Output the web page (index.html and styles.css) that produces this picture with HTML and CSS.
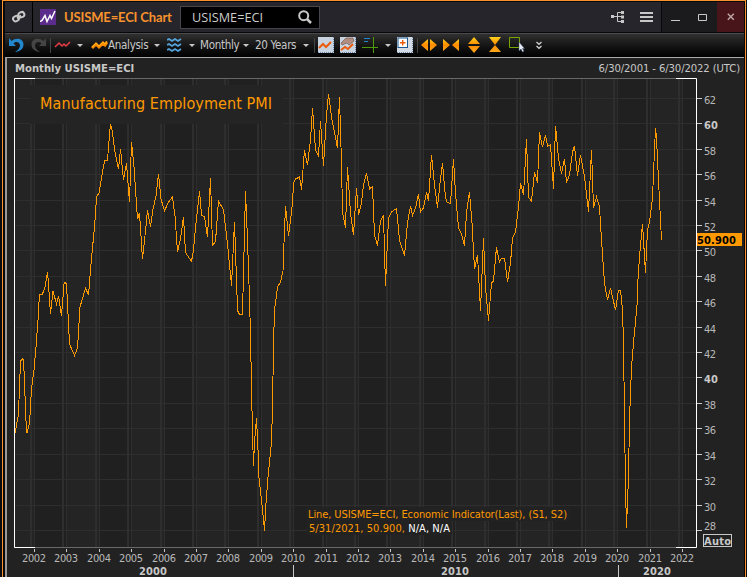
FILE: index.html
```html
<!DOCTYPE html>
<html lang="en">
<head>
    <meta charset="UTF-8" />
    <meta name="viewport" content="width=device-width, initial-scale=1.0"/>
    <title>USISME=ECI Chart</title>
    <link rel="stylesheet" href="styles.css">
</head>
<body>
<div class="window">
    <header class="titlebar">
        <div class="link-cell">
            <svg width="14" height="14" viewBox="0 0 14 14" fill="none" stroke="#c8c8c8" stroke-width="2">
                <rect x="1.2" y="6.2" width="6" height="5" rx="2.5" transform="rotate(-25 4 9)"/>
                <rect x="6.5" y="2.2" width="6" height="5" rx="2.5" transform="rotate(-25 9.5 5)"/>
                <path d="M5 8.5l4-3"/>
            </svg>
        </div>
        <svg class="logo" width="16" height="16" viewBox="0 0 16 16">
            <rect width="16" height="16" fill="#5c2c8c"/>
            <path d="M0 12.5l2-1 3-5 2 6 3-6 1.500 3L15 2" fill="none" stroke="#fff" stroke-width="1.5"/>
        </svg>
        <h1>USISME=ECI Chart</h1>
        <div class="search">
            <span>USISME=ECI</span>
            <svg width="14" height="14" viewBox="0 0 14 14" fill="none" stroke="#c8c8c8">
                <circle cx="5.700" cy="5.700" r="4.500" stroke-width="2"/>
                <path d="M9 9l4 4" stroke-width="2.500"/>
            </svg>
        </div>
        <div class="menu-icons">
            <svg width="14" height="14" viewBox="0 0 14 14" fill="#c8c8c8">
                <path d="M0 5h3v3H0zM10 1h3v3h-3zM10 5.500h3v3h-3zM10 10h3v3h-3z"/>
                <path d="M3 6.500h7M10 2.500H6.500v9H10" fill="none" stroke="#c8c8c8"/>
            </svg>
            <svg width="13" height="12" viewBox="0 0 13 12" fill="#c8c8c8">
                <path d="M0 1h13v2H0zM0 5h13v2H0zM0 9h13v2H0z"/>
            </svg>
        </div>
        <div class="win-btns">
            <svg width="55" height="29" viewBox="0 0 55 29" fill="none" stroke="#c8c8c8">
                <path d="M9 18.500h9M36.500 12.500h8v6h-8z"/>
            </svg>
        </div>
        <div class="close">
            <svg width="8" height="8" viewBox="0 0 8 8"><path d="M.8.8l6 6M6.800.8l-6 6" stroke="#c0a8a8" stroke-width="1.400"/></svg>
        </div>
    </header>

    <nav class="toolbar">
        <svg width="17" height="16" viewBox="0 0 17 16"><path d="M1 1v8h7L5.500 6.500C8 4 12 5 12 8.500 12 11 10 13 7 15c5-.5 8.500-3 8.500-7.500C15.500 1.500 8 0 3.500 4z" fill="#2287cc"/></svg>
        <svg width="17" height="16" viewBox="0 0 17 16"><path d="M15 1v8H8l2.500-2.500C8 4 4 5 4 8.500 4 11 6 13 9 15 4 14.500.5 12 .5 7.500.5 1.500 8 0 12.500 4z" fill="#454545"/></svg>
        <i class="sep"></i>
        <svg width="17" height="8" viewBox="0 0 17 8"><path d="M1 6l4-4 3 3 2-2 2 2 4-4" fill="none" stroke="#e63c46" stroke-width="1.500"/></svg>
        <i class="arrow"></i>
        <svg width="17" height="11" viewBox="0 0 17 11"><path d="M1 8l4-4 3 3 4-4 2 2 2-3" fill="none" stroke="#ff8c00" stroke-width="3"/><path d="M1 7l4-4 3 3 4-4 2 2 2-3" fill="none" stroke="#ffb81c"/></svg>
        <span>Analysis</span>
        <i class="arrow"></i>
        <svg width="15" height="15" viewBox="0 0 15 15"><path d="M0 2l2-1 3 2 3-2 3 2 3-2M0 7l2-1 3 2 3-2 3 2 3-2M0 12l2-1 3 2 3-2 3 2 3-2" fill="none" stroke="#55a5dc" stroke-width="1.800"/></svg>
        <i class="arrow"></i>
        <span>Monthly</span>
        <i class="arrow"></i>
        <span>20 Years</span>
        <i class="arrow"></i>
        <i class="sep"></i>
        <svg width="16" height="16" viewBox="0 0 16 16"><rect width="16" height="16" fill="#c9d3df"/><path d="M15.500 0v16M0 15.500h16" stroke="#6688ad" stroke-dasharray="1 1"/><path d="M1 11l4-4 3 3 5-5" fill="none" stroke="#ea5b0c" stroke-width="2"/></svg>
        <svg width="16" height="16" viewBox="0 0 16 16"><rect width="16" height="16" fill="#c9d3df"/><path d="M15.500 0v16M0 15.500h16" stroke="#6688ad" stroke-dasharray="1 1"/><path d="M1 6l5-5h7l1 3-5 4-2-2-5 2z" fill="#b08d80" stroke="#6c5047" stroke-width=".6"/><path d="M1 13l4-3 3 2 5-5" fill="none" stroke="#ea5b0c" stroke-width="2"/></svg>
        <svg width="17" height="16" viewBox="0 0 17 16"><path d="M11.500 0v16M0 10.500h16" stroke="#4e9c0a"/><path d="M2 1.500h6M2 4.500h4" stroke="#2287cc"/></svg>
        <i class="arrow"></i>
        <svg width="16" height="16" viewBox="0 0 16 16"><rect width="16" height="16" fill="#d5dbe3"/><path d="M15.500 0v16M0 15.500h16" stroke="#6688ad" stroke-dasharray="1 1"/><rect x="1" y="1" width="9.500" height="9.500" fill="#fff" stroke="#1b5791"/><path d="M5.700 3v5.500M3 5.700h5.500" stroke="#ea5b0c" stroke-width="1.400"/></svg>
        <i class="sep"></i>
        <svg width="16" height="14" viewBox="0 0 16 14"><path d="M0 7l7-6v12zM16 7L9 1v12z" fill="url(#gold)"/></svg>
        <svg width="16" height="14" viewBox="0 0 16 14"><path d="M0 1l7 6-7 6zM16 1L9 7l7 6z" fill="url(#gold)"/></svg>
        <svg width="14" height="16" viewBox="0 0 14 16"><path d="M1 7l6-7 6 7zM1 9l6 7 6-7z" fill="url(#gold)"/></svg>
        <svg width="14" height="16" viewBox="0 0 14 16"><path d="M1 0h12L7 8zM1 15h12L7 8z" fill="url(#gold)"/></svg>
        <svg width="16" height="16" viewBox="0 0 16 16"><path d="M.5.5h10v10H.5z" fill="none" stroke="#78a800"/><path d="M10 5v9l2-2 1.500 3 1.500-1-1.500-2.500h2z" fill="#e4ebf5" stroke="#46546b" stroke-width=".5"/></svg>
        <svg width="6" height="9" viewBox="0 0 6 9"><path d="M.5 1L3 3.300 5.500 1M.5 5L3 7.300 5.500 5" fill="none" stroke="#d0d0d0" stroke-width="1.300"/></svg>
    </nav>

    <main class="panel">
        <div class="panel-head">
            <b>Monthly USISME=ECI</b>
            <span>6/30/2001 - 6/30/2022 (UTC)</span>
        </div>
        <svg class="chart" width="737" height="500" viewBox="7 77 737 500">
            <defs>
                <linearGradient id="gold" x1="0" y1="0" x2="0" y2="1">
                    <stop offset="0" stop-color="#ffd21c"/>
                    <stop offset=".5" stop-color="#ff8a00"/>
                    <stop offset="1" stop-color="#ffa91a"/>
                </linearGradient>
            </defs>
            <g id="grid" shape-rendering="crispEdges"></g>
            <rect x="30" y="85" width="253" height="39" fill="#242424"/>
            <rect x="307" y="507" width="263" height="14" fill="#222"/>
            <rect x="307" y="521" width="145" height="14" fill="#222"/>
            <polyline class="series" shape-rendering="crispEdges" points="15,433 18,417 19,400 20,374 20.7,361 23,358.5 24,371 25,396 26,421 27,433 29,425 30,415 31,397 32,385 34,370 36,347 38,320 39.5,294 42.5,294 45,287 47.5,272 48.5,284 50.5,314 53,291 56.5,304 58.5,296 61.5,316 64,284 64.7,282.5 66.5,283.5 69.5,344 74.5,355.5 77.5,348 80,307 85.5,288 88.5,295 91,264 94,232 94.5,228 96.5,197 99,193 101.5,178 104.5,161 107.5,160 109,141 110.5,124 112,130 115,152 118.5,169 120.5,149 123.5,180 126.5,163 129.5,202 131.5,142 134,167 137.5,219 139.5,213 142.5,259 145.5,231 147.5,210 150.5,227 153,209 156,196 158.5,174 161,199 164.5,211 168,203 172.5,197 175,216 177.5,252 180.5,239 183.5,217 185.5,252.5 191.5,261.5 193.5,250 195.5,228 199.5,191 201.5,215 204.5,217 207.5,237 210.5,178 212.5,245.5 215.5,241.5 218.5,201 223.5,210 227.5,244 231.5,285.5 234.5,222 237,295 237.7,311 239.5,314.5 242.5,314.5 243,293 245.5,191 247.5,240 249.5,299 250.5,335 251.5,387 252.5,433 253.5,466 254.5,442 256.5,418 258.5,460 259,478 261.5,500 264.5,530.5 266,503 268,477 270,457 271.5,442 272.5,407 273.5,345 274.5,310 276.5,295 277.5,287 280.5,282 283,271 284,243 285.5,206 288.5,236 290.5,220 292.5,203 293.5,183 295.5,179 299.5,177 301.5,189.5 304.5,150 307.5,165 310.5,140 312.5,108 315.5,150 318.5,156 320.5,121 323.5,166 326.5,115 328.5,94 332,120 337.5,148 339.5,97 341.5,163 342.5,212 345.5,228 347.5,167 350.5,213 353.5,235 356.5,188 358.5,215 361.5,203 363.5,185 366.5,173 369.5,189 372.5,186.5 374.5,235 377.5,245.5 380.5,221 383.5,215 385.5,285.5 388.5,218 391.5,212 396.5,208.5 399.5,240 404.5,255.5 407.5,223 410.5,206 412.5,215.5 415.5,208 418.5,194 420.5,212 423.5,208 426.5,192 428.5,200.5 431.5,155 434.5,185 437.5,207.5 440,183 442.5,163 445.5,198 447,202 450.5,203.5 453.5,159 455.5,193 458.5,228 461.5,234 464.5,245.5 466.5,213 469.5,192 472,223 474.5,269 477.5,255 480.5,310.5 483.5,238 485.5,287 488.5,320.5 491.5,283 493.5,281 496.5,247 499.5,262 501.5,258 504.5,258 507.5,282 510.5,263 512.5,238 515.5,232 518.5,207 520.5,183 523.5,195 526.5,139 528.5,197 531.5,201.5 534.5,172 537.5,182.5 539.5,132 542.5,147 545.5,135 547.5,146 550.5,145 553.5,188.5 555.5,126 558.5,158 561.5,173.5 564.5,159 566.5,182.5 569.5,175 572.5,152 574.5,146 577.5,176 580.5,155 584.5,177 588.5,211.5 591.5,150 593.5,207.5 596.5,197 599.5,207 601.5,240 604.5,283 607.5,300 610.5,288 615.5,310 618.5,290 620.5,290 622.5,310 623.5,343 624.5,417 625.5,487 626.5,527.5 628.5,477 629.5,420 631.5,367 633.5,343 637.5,300 637.5,287 639.5,257 642.5,224 645.5,272.5 647.5,230 649.5,222 652.5,198 654.5,150 655.5,128 656.5,138 658.5,180 661.5,240"/>
            <g id="axes"></g>
            <text class="chart-title" x="40" y="109" textLength="232">Manufacturing Employment PMI</text>
            <text class="legend" x="308" y="518" textLength="259">Line, USISME=ECI, Economic Indicator(Last), (S1, S2)</text>
            <text class="legend" x="309" y="532" textLength="141">5/31/2021, 50.900, <tspan fill="#fff">N/A, N/A</tspan></text>
            <rect x="697" y="233" width="45" height="13" fill="#f90"/>
            <text class="last" x="697" y="244" textLength="39">50.900</text>
            <rect x="703.5" y="534.5" width="28" height="12" fill="none" stroke="#c8c8c8"/>
            <text class="bold" x="704" y="545" textLength="27">Auto</text>
        </svg>
    </main>
</div>

<script>
    const grid = document.getElementById("grid");
    const axes = document.getElementById("axes");
    const left = 15, right = 696, top1 = 79, bottom = 547;

    const xOf = year => Math.round(34 + (year - 2002) * 32.4);
    const yOf = value => Math.floor(123.8 + (60 - value) * 12.708);

    let g = `<rect x="${left}" y="${top1}" width="${right - left}" height="${bottom - top1}" fill="#242424"/>`;
    let a = "";

    for (let year = 2002; year <= 2022; year++) {
      const x = xOf(year);
      if (year % 2 === 0) {
        const end = Math.min(xOf(year + 1), right);
        g += `<rect x="${x}" y="${top1}" width="${end - x}" height="${bottom - top1}" fill="#202020"/>`;
      }
      g += `<rect class="line" x="${x - 4}" y="${top1}" width="2" height="${bottom - top1}"/>`;
      g += `<rect class="line" x="${x}" y="${top1}" width="1" height="${bottom - top1}"/>`;
      a += `<rect class="tick" x="${x}" y="549" width="1" height="3"/>`;
      a += `<text class="tick-text" x="${x - 12}" y="562" textLength="24">${year}</text>`;
    }

    for (let value = 28; value <= 62; value += 2) {
      const y = yOf(value);
      const bold = value % 20 === 0 ? " bold" : "";
      g += `<rect class="line" x="${left}" y="${y}" width="${right - left}" height="1"/>`;
      a += `<rect class="tick" x="697" y="${y}" width="5" height="1"/>`;
      a += `<text class="tick-text${bold}" x="704" y="${value === 28 ? y : y + 6}" textLength="${bold ? 14 : 12}">${value}</text>`;
    }

    // frame: grey edges, bright at the corners
    a += `<path d="M14 78.500H696M14 547.500H696" stroke="#686868"/>`;
    a += `<path d="M35 78.500H14.500V547.500H35M676 78.500H696.500V547.500H676" fill="none" stroke="#fff"/>`;

    // decades
    a += `<path d="M293.500 565v12M618.500 565v12" stroke="#c8c8c8"/>`;
    [[2000, 139], [2010, 441], [2020, 643]].forEach(d => {
      a += `<text class="tick-text bold" x="${d[1]}" y="575" textLength="28">${d[0]}</text>`;
    });

    grid.innerHTML = g;
    axes.innerHTML = a;
</script>
</body>
</html>
```
FILE: styles.css
```css
body {
  margin: 0;
  background: #0b0b12;
  color: #c8c8c8;
  font-family: "DejaVu Sans Condensed", "DejaVu Sans", sans-serif;
  font-stretch: condensed;
  font-size: 12px;
  overflow: hidden;
}

svg {
  display: block;
}

.window {
  box-sizing: border-box;
  width: 744px;
  height: 577px;
  margin-left: 2px;
  padding: 1px 1px 0 2px;
  border: 1px solid #f7922d;
  border-bottom: none;
  background: #08080c;
  overflow: hidden;
}

.titlebar {
  display: flex;
  align-items: center;
  height: 30px;
  background: #25252b;
}

.link-cell {
  display: flex;
  align-items: center;
  justify-content: center;
  width: 27px;
  height: 30px;
  border-right: 1px solid #000;
}

.logo {
  margin-left: 7px;
}

h1 {
  margin: 0 0 0 8px;
  width: 116px;
  color: #f7922d;
  font-family: Lato, sans-serif;
  font-stretch: normal;
  font-size: 13px;
  font-weight: bold;
  letter-spacing: -0.15px;
  white-space: nowrap;
}

.search {
  box-sizing: border-box;
  display: flex;
  align-items: center;
  justify-content: space-between;
  width: 140px;
  height: 23px;
  padding: 0 7px 0 11px;
  border: 1px solid #45454d;
  background: #000;
  color: #ccc;
  font-family: "Open Sans", sans-serif;
  font-stretch: normal;
  font-size: 12.7px;
}

.menu-icons {
  display: flex;
  align-items: center;
  gap: 15px;
  margin-left: auto;
  padding-right: 8px;
}

.win-btns {
  height: 30px;
  border-left: 1px solid #08080c;
  background: #1b1b1d;
}

.close {
  display: flex;
  align-items: center;
  justify-content: center;
  width: 27px;
  height: 30px;
  background: #48151a;
}

.toolbar {
  box-sizing: border-box;
  display: grid;
  grid-template-columns: 23px 19px 4px 23px 14px 17px 46px 13px 22px 11px 43px 12px 48px 11px 4px 22px 22px 23px 12px 20px 4px 22px 24px 21px 21px 27px 10px;
  align-items: center;
  height: 24px;
  margin-top: 1px;
  padding: 0 0 1px 3px;
  border-top: 1px solid #4a4a4a;
  background: linear-gradient(#303030, #151515 50%, #000);
  font-size: 11.5px;
  letter-spacing: -0.3px;
  white-space: nowrap;
}

.sep {
  width: 1px;
  height: 15px;
  background: #444;
}

.arrow {
  width: 0;
  border: 3px solid transparent;
  border-top-color: #c8c8c8;
  border-bottom: none;
}

.panel {
  width: 739px;
  height: 520px;
  border-top: 1px solid #aaa;
  border-left: 2px solid #999;
  box-sizing: border-box;
  background: #222;
}

.panel-head {
  display: flex;
  align-items: center;
  justify-content: space-between;
  height: 19px;
  padding: 2px 4px 0 8px;
  box-sizing: border-box;
  font-size: 11.2px;
}

.panel-head span {
  letter-spacing: -0.1px;
}

.series {
  fill: none;
  stroke: #f90;
  stroke-width: 1;
}

.line {
  fill: #2e2e2e;
}

.tick {
  fill: #c8c8c8;
}

.tick-text {
  fill: #b8b8b8;
  font-size: 11px;
}

.bold {
  fill: #c8c8c8;
  font-size: 11px;
  font-weight: bold;
}

.chart-title {
  fill: #f90;
  font-size: 16px;
}

.legend {
  fill: #f90;
  font-size: 11px;
}

.last {
  fill: #000;
  font-size: 11px;
  font-weight: bold;
}
```
